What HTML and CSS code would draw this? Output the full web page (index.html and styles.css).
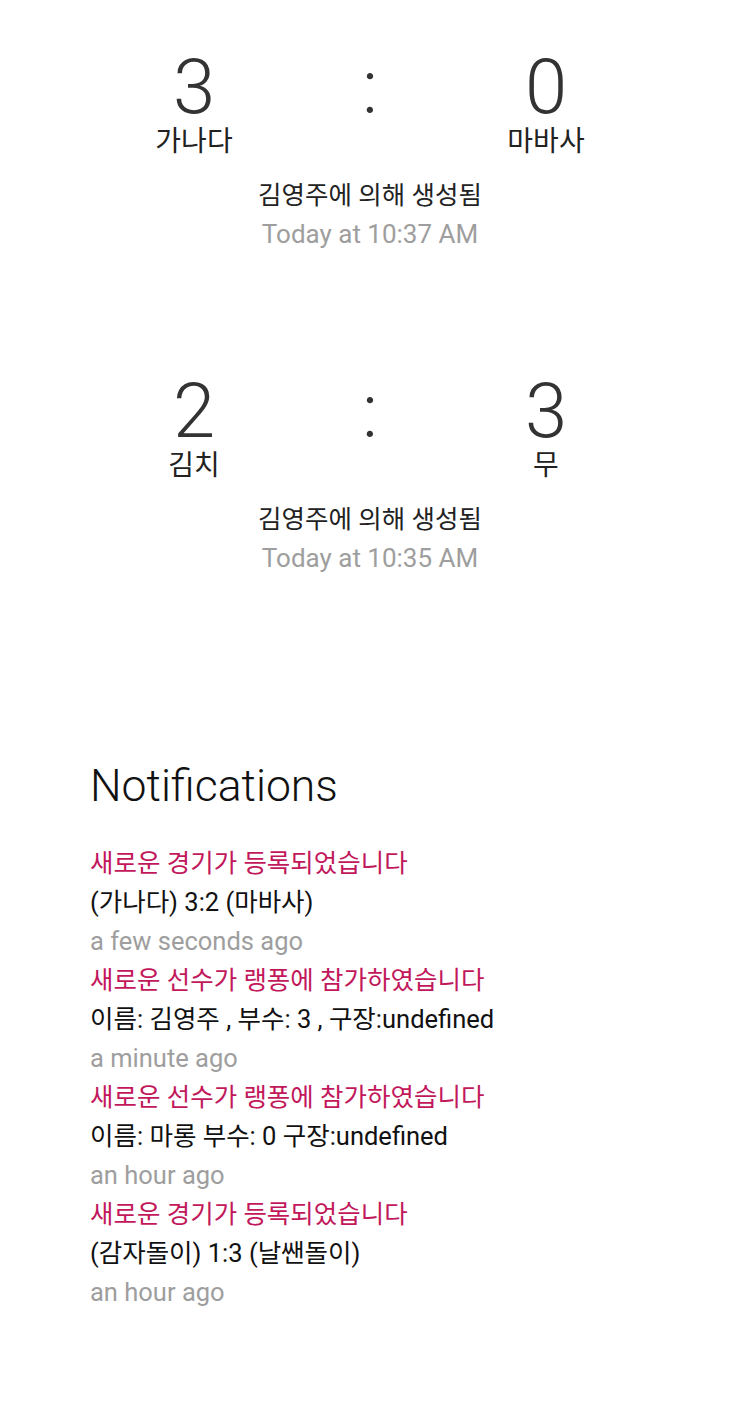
FILE: index.html
```html
<!DOCTYPE html>
<html lang="ko">
<head>
<meta charset="utf-8">
<title>Games</title>
<link rel="stylesheet" href="styles.css">
</head>
<body>
<main class="page">
  <section class="games">
    <article class="game">
      <div class="score-row">
        <div class="team"><div class="score">3</div><div class="name">가나다</div></div>
        <div class="team"><div class="score colon">:</div></div>
        <div class="team"><div class="score">0</div><div class="name">마바사</div></div>
      </div>
      <div class="creator">김영주에 의해 생성됨</div>
      <div class="time">Today at 10:37 AM</div>
    </article>
    <article class="game">
      <div class="score-row">
        <div class="team"><div class="score">2</div><div class="name">김치</div></div>
        <div class="team"><div class="score colon">:</div></div>
        <div class="team"><div class="score">3</div><div class="name">무</div></div>
      </div>
      <div class="creator">김영주에 의해 생성됨</div>
      <div class="time">Today at 10:35 AM</div>
    </article>
  </section>
  <section class="notifications">
    <h2 class="notif-title">Notifications</h2>
    <ul class="notif-list">
      <li class="notif">
        <div class="notif-head">새로운 경기가 등록되었습니다</div>
        <div class="notif-body">(가나다) 3:2 (마바사)</div>
        <div class="notif-time">a few seconds ago</div>
      </li>
      <li class="notif">
        <div class="notif-head">새로운 선수가 랭퐁에 참가하였습니다</div>
        <div class="notif-body">이름: 김영주 , 부수: 3 , 구장:undefined</div>
        <div class="notif-time">a minute ago</div>
      </li>
      <li class="notif">
        <div class="notif-head">새로운 선수가 랭퐁에 참가하였습니다</div>
        <div class="notif-body">이름: 마롱 부수: 0 구장:undefined</div>
        <div class="notif-time">an hour ago</div>
      </li>
      <li class="notif">
        <div class="notif-head">새로운 경기가 등록되었습니다</div>
        <div class="notif-body">(감자돌이) 1:3 (날쌘돌이)</div>
        <div class="notif-time">an hour ago</div>
      </li>
    </ul>
  </section>
</main>
</body>
</html>
```
FILE: styles.css
```css
html, body {
  margin: 0;
  padding: 0;
  background: #ffffff;
}
body {
  font-family: Roboto, "Noto Sans CJK KR", sans-serif;
  color: #222;
}
.page {
  display: flex;
  flex-direction: column;
}
.games {
  display: flex;
  flex-direction: column;
  gap: 118px;
  padding-top: 46px;
}
.game {
  display: flex;
  flex-direction: column;
  align-items: center;
}
.score-row {
  display: grid;
  grid-template-columns: repeat(3, 176px);
  justify-content: center;
}
.team {
  display: flex;
  flex-direction: column;
  align-items: center;
}
.score {
  font-size: 76px;
  font-weight: 300;
  line-height: 82px;
  color: #333;
}
.name {
  font-size: 28px;
  line-height: 28px;
  color: #222;
}
.creator {
  margin-top: 18px;
  font-size: 25.5px;
  line-height: 42px;
  color: #222;
}
.time {
  font-size: 26px;
  line-height: 36px;
  color: #9e9e9e;
}
.notifications {
  padding: 0 90px;
  margin-top: 185px;
}
.notif-title {
  margin: 0;
  font-weight: 300;
  font-size: 44.5px;
  line-height: 50px;
  color: #111;
}
.notif-list {
  list-style: none;
  margin: 33px 0 0;
  padding: 0;
}
.notif > div {
  font-size: 25.5px;
  line-height: 39px;
}
.notif-head { color: #c2185b; }
.notif-body { color: #111; }
.notif-time { color: #9e9e9e; }
```
